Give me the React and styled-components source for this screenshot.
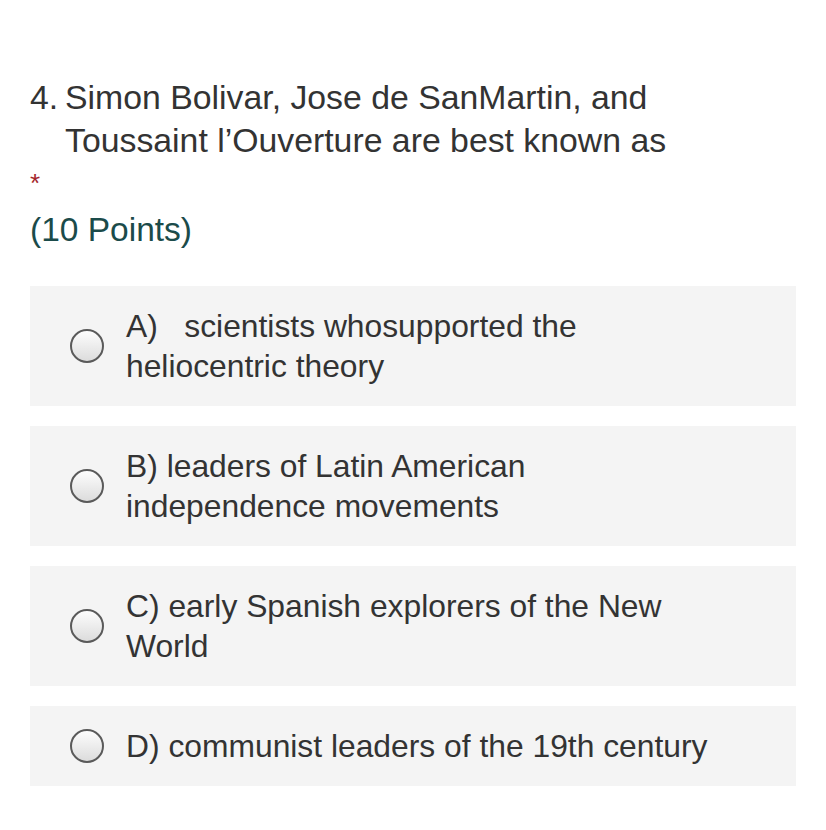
import React from "react";
import styled, { createGlobalStyle } from "styled-components";

const Global = createGlobalStyle`
  html, body { margin: 0; padding: 0; background: #fff; }
  body { font-family: "Liberation Sans", Arial, sans-serif; color: #333; }
`;

const Page = styled.div`
  padding: 76px 30px 30px 30px;
  width: 766px;
`;

const Question = styled.div`
  display: flex;
  font-size: 33.8px;
  line-height: 43px;
  color: #333;
`;

const Num = styled.span`
  width: 35px;
  flex: none;
`;

const QText = styled.span`
  max-width: 610px;
`;

const Req = styled.div`
  color: #a4262c;
  font-size: 26px;
  line-height: 30px;
  margin-top: 6px;
  height: 28px;
`;

const Points = styled.div`
  color: #1b4b4a;
  font-size: 33.5px;
  line-height: 43px;
  margin-top: 12px;
`;

const Options = styled.div`
  display: flex;
  flex-direction: column;
  gap: 20px;
  margin-top: 35px;
`;

const Option = styled.label`
  display: flex;
  align-items: center;
  background: #f4f4f4;
  min-height: 80px;
  padding: 20px 40px;
  box-sizing: border-box;
  gap: 22px;
`;

const Radio = styled.span`
  flex: none;
  width: 34px;
  height: 34px;
  border-radius: 50%;
  box-sizing: border-box;
  border: 2px solid #5a5a5a;
  background: linear-gradient(#fdfdfd, #dcdcdc);
`;

const OptText = styled.span`
  font-size: 31.8px;
  line-height: 40px;
  color: #333;
  max-width: 600px;
`;

const opts = [
  "A)\u00a0\u00a0 scientists whosupported the heliocentric theory",
  "B) leaders of Latin American independence movements",
  "C) early Spanish explorers of the New World",
  "D) communist leaders of the 19th century",
];

export default function App() {
  return (
    <>
      <Global />
      <Page>
        <Question>
          <Num>4.</Num>
          <QText>Simon Bolivar, Jose de SanMartin, and Toussaint l’Ouverture are best known as</QText>
        </Question>
        <Req>*</Req>
        <Points>(10 Points)</Points>
        <Options>
          {opts.map((o) => (
            <Option key={o}>
              <Radio />
              <OptText>{o}</OptText>
            </Option>
          ))}
        </Options>
      </Page>
    </>
  );
}
